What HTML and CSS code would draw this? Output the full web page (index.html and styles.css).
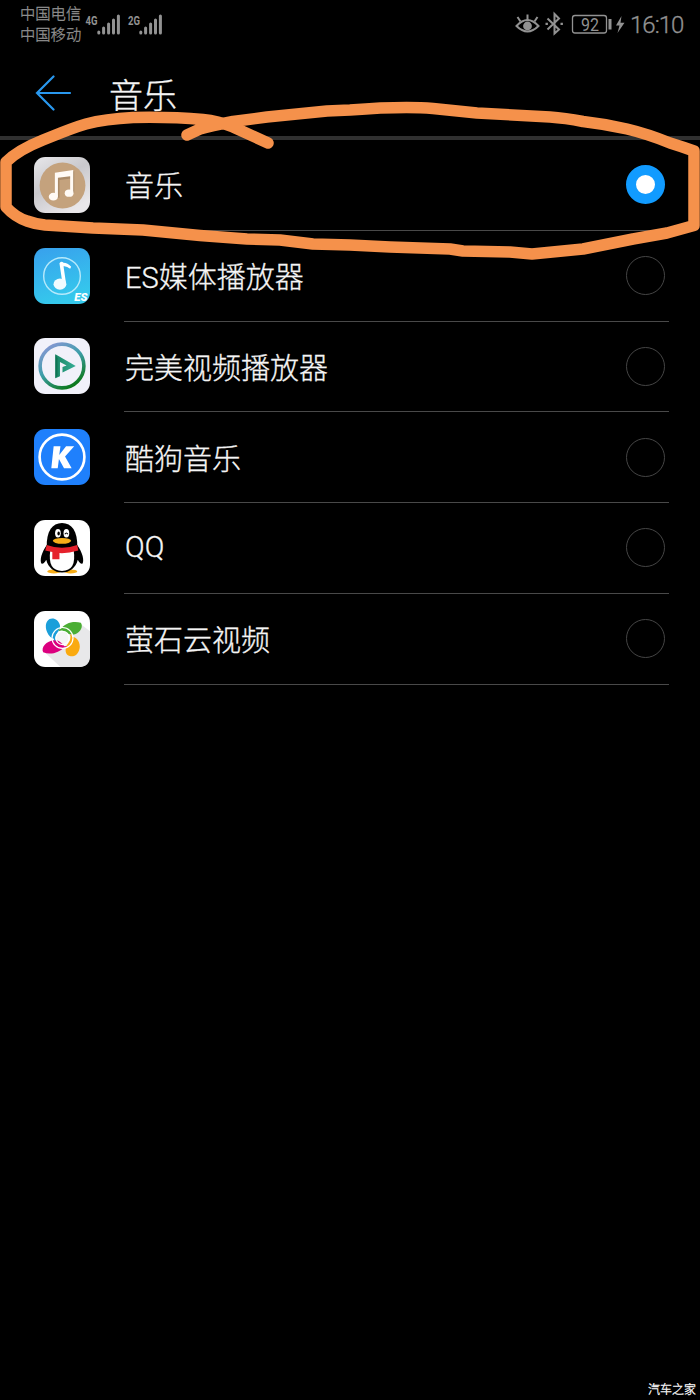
FILE: index.html
```html
<!DOCTYPE html>
<html lang="zh-CN">
    <head>
        <meta charset="utf-8">
        <title>音乐</title>
        <link rel="stylesheet" href="styles.css">
    </head>
    <body>
        <div class="status">
            <div class="carriers">
                <span>中国电信</span>
                <span>中国移动</span>
            </div>
            <svg class="signals" width="80" height="26" viewBox="0 0 80 26">
                <g class="bars">
                    <path d="M13.800 20v1M18.600 16v5M23.600 12v9M28.500 8v13M33.400 4v17"/>
                    <path d="M55.800 20v1M60.600 16v5M65.600 12v9M70.500 8v13M75.400 4v17"/>
                </g>
                <text x="0.5" y="12.500" textLength="12" lengthAdjust="spacingAndGlyphs">4G</text>
                <text x="43" y="12.500" textLength="12" lengthAdjust="spacingAndGlyphs">2G</text>
            </svg>
            <svg class="indicators" width="112" height="26" viewBox="0 0 112 26">
                <!-- eye -->
                <g class="line">
                    <path d="M2.500 16Q13.500 4 24.500 16Q13.500 27 2.500 16Z"/>
                    <path d="M13.500 10V4.500M6.500 11.500L3.500 7M20.500 11.500L23.500 7"/>
                </g>
                <circle class="solid" cx="13.500" cy="16" r="4.400"/>
                <!-- bluetooth -->
                <path class="line" d="M33.500 8.500L45 19.500L40.500 23.500V4L45 8.500L33.500 19.500"/>
                <path class="solid" d="M31.500 12.700h2.400v2.400h-2.400zM46.500 12.700h2.400v2.400h-2.400z"/>
                <!-- battery -->
                <rect class="line slim" x="58.500" y="5.500" width="34" height="17.500" rx="2.500"/>
                <rect class="solid" x="94.500" y="9" width="3" height="10.500"/>
                <text x="67" y="20.500" textLength="18" lengthAdjust="spacingAndGlyphs">92</text>
                <path class="solid" d="M107.500 6L102 15.500h3.500L103.500 23L110.500 12.800h-4z"/>
            </svg>
            <span class="clock">16:10</span>
        </div>

        <header class="title">
            <svg class="back" width="38" height="36" viewBox="0 0 38 36">
                <path d="M35 18H2M18.500 1.500L2 18L18.500 34.500"/>
            </svg>
            <h1>音乐</h1>
        </header>

        <ul class="apps">
            <li>
                <svg class="icon" viewBox="0 0 55 55">
                    <defs>
                        <linearGradient id="silver" x2="0.600" y2="1">
                            <stop offset="0" stop-color="#e8e8eb"/>
                            <stop offset="0.500" stop-color="#c9c8cc"/>
                            <stop offset="1" stop-color="#e9e7ea"/>
                        </linearGradient>
                    </defs>
                    <rect width="55" height="55" rx="11" fill="url(#silver)"/>
                    <circle cx="28" cy="28" r="22.500" fill="#c4a27d"/>
                    <g fill="#8e7253" opacity="0.500" transform="translate(1.500 1)">
                        <path d="M20.500 15.500L38 13V34H35V20L23.500 21.500V39H20.500Z"/>
                    </g>
                    <g fill="#fffaf5">
                        <path d="M20.500 15.500L38.500 12.800V35H35.500V19L23.500 20.500V39H20.500Z"/>
                        <ellipse cx="19" cy="39" rx="4.500" ry="3.800"/>
                        <ellipse cx="34.500" cy="35.500" rx="4.300" ry="3.600"/>
                    </g>
                </svg>
                <div class="row"><span>音乐</span><i class="radio on"></i></div>
            </li>
            <li>
                <svg class="icon" viewBox="0 0 55 55">
                    <defs>
                        <linearGradient id="sky" x1="0" y1="0" x2="0.300" y2="1">
                            <stop offset="0" stop-color="#38a0ed"/>
                            <stop offset="1" stop-color="#35c8ec"/>
                        </linearGradient>
                    </defs>
                    <rect width="55" height="55" rx="11" fill="url(#sky)"/>
                    <circle cx="27.500" cy="27.500" r="18" fill="none" stroke="#b5e9fb" stroke-width="1.400"/>
                    <path d="M25 15Q27 12.500 29 14.500Q33 14.500 36.500 18.500L35.500 20.500Q32 17.500 29 18L31.500 35H28Z" fill="#fff"/>
                    <ellipse cx="25.500" cy="35.500" rx="6.300" ry="5.500" fill="#f0fbff"/>
                    <text class="es" x="39.500" y="52.500" textLength="13" lengthAdjust="spacingAndGlyphs">ES</text>
                </svg>
                <div class="row"><span>ES媒体播放器</span><i class="radio"></i></div>
            </li>
            <li>
                <svg class="icon" viewBox="0 0 55 55">
                    <defs>
                        <linearGradient id="ring" x1="0.200" y1="0" x2="0.800" y2="1">
                            <stop offset="0" stop-color="#8797d4"/>
                            <stop offset="0.450" stop-color="#3d9eaa"/>
                            <stop offset="1" stop-color="#08750d"/>
                        </linearGradient>
                        <linearGradient id="play" x2="1" y2="0">
                            <stop offset="0" stop-color="#188765"/>
                            <stop offset="1" stop-color="#35ad96"/>
                        </linearGradient>
                    </defs>
                    <rect width="55" height="55" rx="11" fill="#f1f1fa"/>
                    <circle cx="27.500" cy="27.500" r="21.500" fill="none" stroke="url(#ring)" stroke-width="3.500"/>
                    <path d="M21 16L41 27.500L28 34V28.500L32 27L25.500 23.500V37.500L21 39.500Z" fill="url(#play)"/>
                    <path d="M21 16L23 20V37L21 39.500Z" fill="#107454"/>
                </svg>
                <div class="row"><span>完美视频播放器</span><i class="radio"></i></div>
            </li>
            <li>
                <svg class="icon" viewBox="0 0 55 55">
                    <rect width="55" height="55" rx="11" fill="#1f80fc"/>
                    <circle cx="27.500" cy="27.500" r="22" fill="none" stroke="#fff" stroke-width="2.600"/>
                    <path d="M19.300 17H26L24.800 25.500L31.500 17H39.500L30.500 27L37 38.500H29.500L24.500 29.500L23.300 38.500H17Z" fill="#fff"/>
                </svg>
                <div class="row"><span>酷狗音乐</span><i class="radio"></i></div>
            </li>
            <li>
                <svg class="icon" viewBox="0 0 55 55">
                    <rect width="55" height="55" rx="11" fill="#fff"/>
                    <g fill="#f7ad18">
                        <ellipse cx="19.500" cy="50.500" rx="6.500" ry="2"/>
                        <ellipse cx="36" cy="50.500" rx="6.500" ry="2"/>
                    </g>
                    <path d="M13 24C7 32 5.500 40 7.500 43C9 43.500 11 41 12 39C14 47 20 51.500 27.500 51.500S41 47 43 39C44 41 46 43.500 47.500 43C49.500 40 48 32 42 24Z"/>
                    <path d="M12.500 27C12 11 18 3 27.500 3S43 11 42.500 27Z"/>
                    <path d="M16 30H39Q42 50 27.500 50Q13 50 16 30Z" fill="#fff"/>
                    <g fill="#fff">
                        <ellipse cx="23.500" cy="13" rx="2.800" ry="4.200"/>
                        <ellipse cx="31.800" cy="13" rx="2.800" ry="4.200"/>
                    </g>
                    <ellipse cx="24.200" cy="13.300" rx="1.200" ry="1.900"/>
                    <path d="M30.300 14Q31.800 11.500 33.300 14" fill="none" stroke="#000"/>
                    <ellipse cx="27.500" cy="20.500" rx="9" ry="2.800" fill="#f7ad18"/>
                    <path d="M12.500 24.500Q27.500 30 42.500 24.500L43.500 30Q33 33 25 32.500V38.500H18V31.500L11 30Z" fill="#e5202b"/>
                </svg>
                <div class="row"><span>QQ</span><i class="radio"></i></div>
            </li>
            <li>
                <svg class="icon" viewBox="0 0 55 55">
                    <rect width="55" height="55" rx="11" fill="#fff"/>
                    <path d="M46 13L55 20V44Q55 55 44 55H26L11 41Z" fill="#e8e8ea"/>
                    <ellipse cx="28" cy="26.500" rx="9" ry="9" fill="#f5f5f5"/>
                    <path d="M18 27C12 23 10 14 13 10C17 5 24 8 25.500 14C26 19 22 22 20 27Z" fill="#1b9fda"/>
                    <path d="M26 18C30 12 38 9.500 46 11.500C48.500 15 46 20 41 22.500C37 24 32 23 26 18Z" fill="#4bae34"/>
                    <path d="M36 25C41 25 45 29 45 35C44.500 41 41 45 36 44.500C31 44 30 39 32 34C34 31 36 29 36 25Z" fill="#faaa10"/>
                    <path d="M30 35C25 41 16 43.500 9 40.500C6.500 36 12 29.500 20 28.500C24 28.500 27 31 30 35Z" fill="#dc007f"/>
                    <path d="M20.500 29A8 8 0 0 1 22.500 21" fill="none" stroke="#1b9fda" stroke-width="1.500"/>
                    <path d="M24.500 19A8 8 0 0 1 34 21" fill="none" stroke="#4bae34" stroke-width="1.500"/>
                    <path d="M36 23A8 8 0 0 1 34.500 32" fill="none" stroke="#faaa10" stroke-width="1.500"/>
                    <path d="M32 35A8 8 0 0 1 23 32" fill="none" stroke="#dc007f" stroke-width="1.500"/>
                    <g fill="none" stroke="#fff" stroke-width="1.200">
                        <circle cx="28" cy="26.500" r="6.500"/>
                        <circle cx="28" cy="26.500" r="10.300"/>
                    </g>
                </svg>
                <div class="row"><span>萤石云视频</span><i class="radio"></i></div>
            </li>
        </ul>

        <!-- hand-drawn loop round the selected app -->
        <svg class="marker" width="700" height="280" viewBox="0 0 700 280">
            <path d="M268 143L233 127Q218 121 203 119.500C180 117.500 155 117 133 117.500Q105 119 86 124C72 128 58 134 43 140Q18 150 6 162V207Q15 217 27 221Q35 224 45 225L93 228L143 230L200 235.500L247 239L280 240L313 244L350 245L390 247L450 249L463 251L510 252L532 254L583 249L633 239L667 233L694 225.500V151Q683 147 670 143Q648 134 627 129Q605 124 583 121.500Q565 118 550 117L477 113L433 108.500Q403 106 350 110L327 111L267 117L233 121.500Q210 126 200 129L187 135"/>
        </svg>

        <footer>汽车之家</footer>
    </body>
</html>
```
FILE: styles.css
```css
* {
    box-sizing: border-box;
}

body {
    width: 700px;
    height: 1400px;
    margin: 0;
    display: flex;
    flex-direction: column;
    position: relative;
    overflow: hidden;
    background: #000;
    color: #f5f5f5;
    font-family: Roboto, "Noto Sans CJK SC", sans-serif;
    font-weight: 300;
    -webkit-text-stroke: 0.300px;
}

.status {
    display: flex;
    align-items: flex-start;
    height: 50px;
    padding: 4px 16px 0 20px;
    color: #929292;
}

.carriers {
    display: flex;
    flex-direction: column;
    width: 64px;
    font-size: 15.300px;
    line-height: 21px;
    white-space: nowrap;
}

.signals {
    margin: 8px 0 0 1px;
}

.signals text {
    fill: #929292;
    font-size: 12px;
    font-weight: 700;
}

.bars {
    stroke: #929292;
    stroke-width: 3;
    stroke-linecap: round;
}

.indicators {
    margin: 6px 0 0 auto;
}

.indicators text {
    fill: #929292;
    font-size: 18px;
    font-weight: 400;
    -webkit-text-stroke: 0;
}

.line {
    fill: none;
    stroke: #929292;
    stroke-width: 2;
}

.slim {
    stroke-width: 1.300;
}

.solid {
    fill: #929292;
}

.clock {
    width: 54px;
    margin: 7px 0 0 4px;
    font-size: 24px;
    line-height: 28px;
    letter-spacing: -1px;
    white-space: nowrap;
}

.title {
    display: flex;
    align-items: center;
    height: 90px;
    padding: 0 35px;
    border-bottom: 4px solid #303030;
}

.back {
    fill: none;
    stroke: #2998ef;
    stroke-width: 2.200;
    stroke-linecap: round;
}

.title h1 {
    margin: 6px 0 0 36px;
    font-size: 34px;
    line-height: 44px;
    font-weight: 300;
}

.apps {
    margin: 0;
    padding: 0 31px 0 34px;
    list-style: none;
}

.apps li {
    display: flex;
    align-items: center;
    height: 90.750px;
}

.icon {
    width: 56px;
    height: 56px;
    flex: none;
    margin-bottom: 1px;
}

.row {
    display: flex;
    flex: 1;
    align-items: center;
    justify-content: space-between;
    height: 100%;
    margin-left: 34px;
    padding-right: 4px;
    border-bottom: 1px solid #494949;
    font-size: 29px;
}

.row span {
    padding: 0 0 1px 1px;
}

.radio {
    width: 39px;
    height: 39px;
    border: 1.500px solid #454545;
    border-radius: 50%;
}

.radio.on {
    border: 10px solid #119bff;
    background: #fff;
}

.es {
    fill: #fff;
    font-size: 10px;
    font-weight: 900;
    font-style: italic;
}

.marker {
    position: absolute;
    left: 0;
    top: 0;
    fill: none;
    stroke: #f5914b;
    stroke-width: 11.500;
    stroke-linecap: round;
    stroke-linejoin: round;
}

footer {
    margin: auto 4px 1px auto;
    color: #fff;
    font-size: 12px;
    line-height: 18px;
    font-weight: 300;
}
```
